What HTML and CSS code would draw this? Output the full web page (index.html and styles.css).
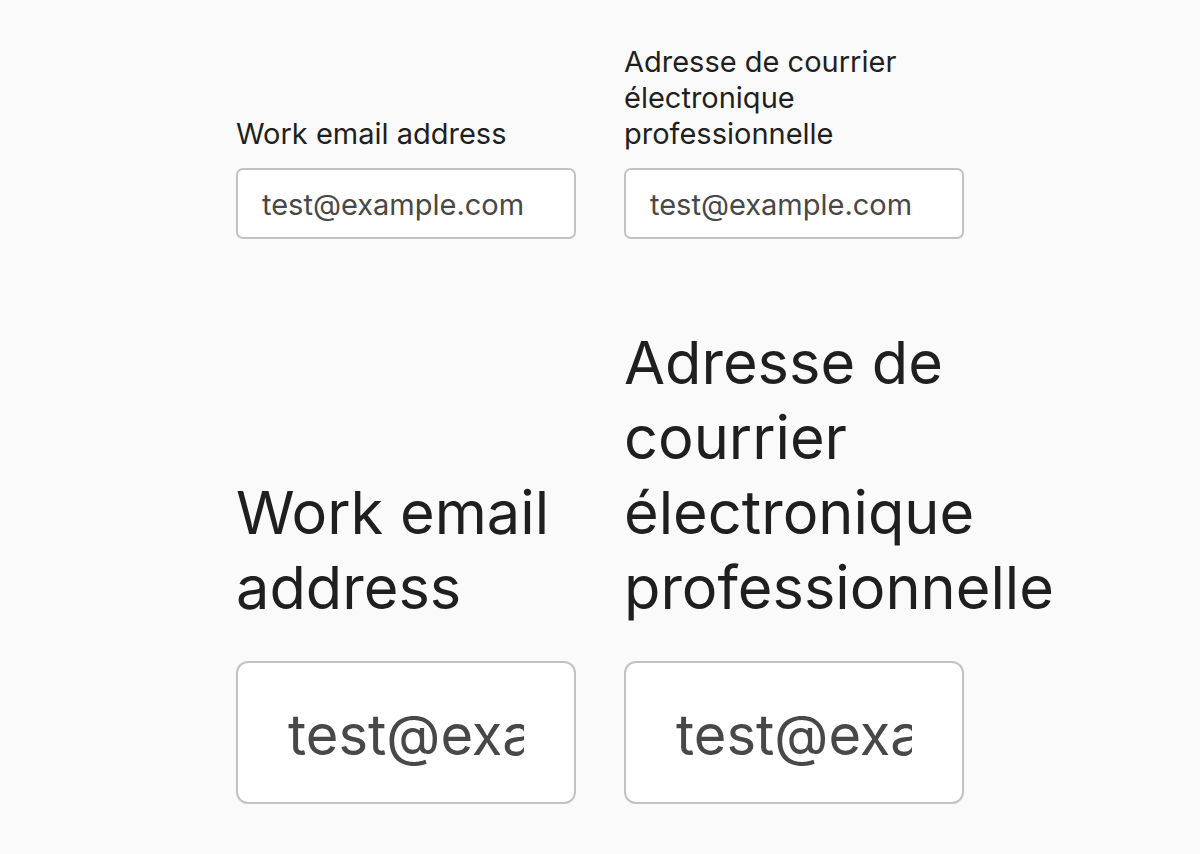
FILE: index.html
```html
<!DOCTYPE html>
<html lang="en">
<head>
    <meta charset="UTF-8">
    <meta name="viewport" content="width=device-width, initial-scale=1.0">
    <title>Email field labels</title>
    <link rel="stylesheet" href="styles.css">
</head>
<body>

<div class="page">
    <!-- Taille normale -->
    <div class="row">
        <div class="field">
            <label for="emailEn">Work email address</label>
            <input type="email" id="emailEn" placeholder="test@example.com">
        </div>
        <div class="field">
            <label for="emailFr" lang="fr">Adresse de courrier électronique professionnelle</label>
            <input type="email" id="emailFr" placeholder="test@example.com">
        </div>
    </div>

    <!-- Texte agrandi -->
    <div class="row large">
        <div class="field">
            <label for="emailEnLg">Work email address</label>
            <input type="email" id="emailEnLg" placeholder="test@example.com">
        </div>
        <div class="field">
            <label for="emailFrLg" lang="fr">Adresse de courrier électronique professionnelle</label>
            <input type="email" id="emailFrLg" placeholder="test@example.com">
        </div>
    </div>
</div>

</body>
</html>
```

FILE: styles.css
```css
/* Estilos principales */
body {
    font-family: Inter, "Noto Sans", sans-serif;
    margin: 0;
    padding: 0;
    background-color: #fafafa;
    color: #1f1f1f;
}
.page {
    padding: 44px 0 0 236px;
}
.row {
    display: flex;
    align-items: flex-end;
    gap: 48px;
    margin-bottom: 86px;
}
.field {
    width: 340px;
    display: flex;
    flex-direction: column;
}
label {
    display: block;
    font-size: 29px;
    line-height: 36px;
    margin-bottom: 16px;
}
input {
    box-sizing: border-box;
    width: 340px;
    height: 71px;
    padding: 2px 24px 0;
    border: 2px solid #c2c2c2;
    border-radius: 7px;
    background: #fff;
    font-family: inherit;
    font-size: 29px;
    color: #444;
}
input::placeholder {
    color: #484848;
    opacity: 1;
}
.large label {
    font-size: 59.5px;
    line-height: 75px;
    margin-bottom: 36px;
}
.large input {
    height: 143px;
    padding: 4px 50px 0;
    font-size: 56px;
    border-radius: 12px;
}
```
